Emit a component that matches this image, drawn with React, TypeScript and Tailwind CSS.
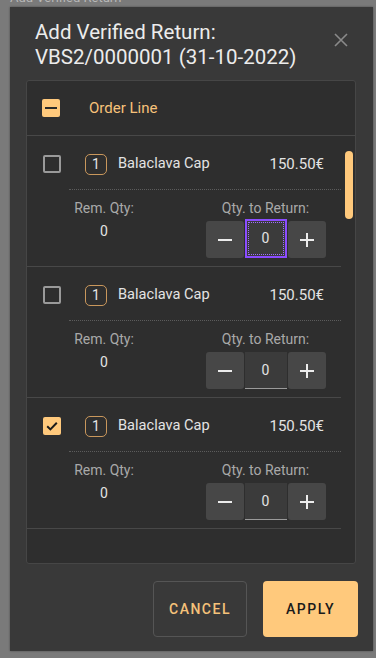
import React from "react";

function Minus() {
  return (
    <svg width="16" height="16" viewBox="0 0 16 16">
      <rect x="1" y="7" width="14" height="2" fill="#ececec" />
    </svg>
  );
}
function Plus() {
  return (
    <svg width="16" height="16" viewBox="0 0 16 16">
      <rect x="1" y="7" width="14" height="2" fill="#ececec" />
      <rect x="7" y="1" width="2" height="14" fill="#ececec" />
    </svg>
  );
}

function Checkbox({ state }: { state: "off" | "on" | "mixed" }) {
  if (state === "off")
    return <div className="w-[18px] h-[18px] rounded-[2px] border-2 border-[#9a9a9a] shrink-0" />;
  return (
    <div className="w-[18px] h-[18px] rounded-[2px] bg-[#ffc97c] shrink-0 flex items-center justify-center">
      {state === "on" ? (
        <svg width="14" height="14" viewBox="0 0 14 14">
          <path d="M2.2 7.3 L5.4 10.4 L11.8 3.8" stroke="#1b1b1b" strokeWidth="2" fill="none" />
        </svg>
      ) : (
        <div className="w-[12px] h-[2px] bg-[#2a2a2a]" />
      )}
    </div>
  );
}

function Row({ checked, focused }: { checked: boolean; focused: boolean }) {
  return (
    <div className="w-[314px] border-b border-[#484848] pb-[8px]">
      <div className="flex items-center h-[22px] mt-[17px] pl-[16px] pr-[17px]">
        <Checkbox state={checked ? "on" : "off"} />
        <div className="ml-[24px] w-[22px] h-[21px] rounded-[5px] border border-[#c9975c] flex items-center justify-center text-[14px] text-[#e6e6e6]">
          1
        </div>
        <div className="ml-[11px] text-[14.6px] text-[#e3e3e3]">Balaclava Cap</div>
        <div className="ml-auto text-[15px] text-[#e3e3e3]">150.50€</div>
      </div>
      <div className="ml-[42px] mt-[14px] border-t border-dotted border-[#5c5c5c]" />
      <div className="flex justify-between pl-[42px] pr-[16px] mt-[8px]">
        <div className="w-[70px] flex flex-col items-center">
          <div className="text-[14px] leading-[20px] text-[#a9a9a9]">Rem. Qty:</div>
          <div className="mt-[3px] text-[14px] leading-[20px] text-[#e3e3e3]">0</div>
        </div>
        <div className="w-[119px] flex flex-col items-center">
          <div className="text-[14px] leading-[20px] text-[#a9a9a9] whitespace-nowrap">Qty. to Return:</div>
          <div className="mt-[3px] flex gap-[1px] h-[37px]">
            <div className="w-[38px] h-full rounded-[3px] bg-[#474747] flex items-center justify-center">
              <Minus />
            </div>
            {focused ? (
              <div className="w-[42px] h-[39px] -mt-[2px] border-2 border-[#8b4cff] bg-[#3b3b3b] p-[1px]">
                <div className="w-full h-full border border-dotted border-[#9d6cff] flex items-center justify-center text-[14px] text-[#e3e3e3]">
                  0
                </div>
              </div>
            ) : (
              <div className="w-[42px] h-full bg-[#3b3b3b] border-b border-[#9a9a9a] flex items-center justify-center text-[14px] text-[#e3e3e3]">
                0
              </div>
            )}
            <div className="w-[38px] h-full rounded-[3px] bg-[#474747] flex items-center justify-center">
              <Plus />
            </div>
          </div>
        </div>
      </div>
    </div>
  );
}

export default function App() {
  return (
    <div
      className="relative w-[376px] h-[658px] bg-[#7a7a7a] overflow-hidden"
      style={{ fontFamily: "Roboto, 'Noto Sans', sans-serif" }}
    >
      <div className="absolute left-[10px] top-[-10px] text-[13px] leading-[16px] text-[#b8b8b8]">
        Add Verified Return
      </div>
      <div className="absolute left-[10px] top-[7px] w-[363px] h-[644px] bg-[#393939] shadow-[0_0_2px_rgba(0,0,0,0.4)] flex flex-col">
        <div className="flex pl-[25px] pr-[25px] pt-[13px]">
          <div className="text-[20.5px] leading-[25px] text-[#ececec]">
            Add Verified Return:
            <br />
            VBS2/0000001 (31-10-2022)
          </div>
          <div className="ml-auto mt-[13px] w-[14px] h-[14px]">
            <svg width="14" height="14" viewBox="0 0 14 14">
              <path d="M1 1 L13 13 M13 1 L1 13" stroke="#8a8a8a" strokeWidth="1.6" />
            </svg>
          </div>
        </div>
        <div className="relative mt-[10px] ml-[16px] w-[330px] h-[484px] bg-[#2e2e2e] border border-[#464646] rounded-[3px] overflow-hidden">
          <div className="h-[55px] border-b border-[#484848] flex items-center pl-[15px]">
            <Checkbox state="mixed" />
            <div className="ml-[29px] text-[15px] text-[#f7c27a]">Order Line</div>
          </div>
          <Row checked={false} focused={true} />
          <Row checked={false} focused={false} />
          <Row checked={true} focused={false} />
          <div className="absolute left-[318px] top-[70px] w-[8px] h-[68px] rounded-full bg-[#ffc97c]" />
        </div>
        <div className="flex justify-end gap-[16px] mt-[17px] pr-[15px]">
          <button className="w-[94px] h-[56px] rounded-[4px] border border-[#555555] text-[14px] font-medium tracking-[1.5px] text-[#f5c27a]">
            CANCEL
          </button>
          <button className="w-[95px] h-[56px] rounded-[4px] bg-[#ffc97c] text-[14px] font-medium tracking-[1.5px] text-[#1a1a1a]">
            APPLY
          </button>
        </div>
      </div>
    </div>
  );
}
